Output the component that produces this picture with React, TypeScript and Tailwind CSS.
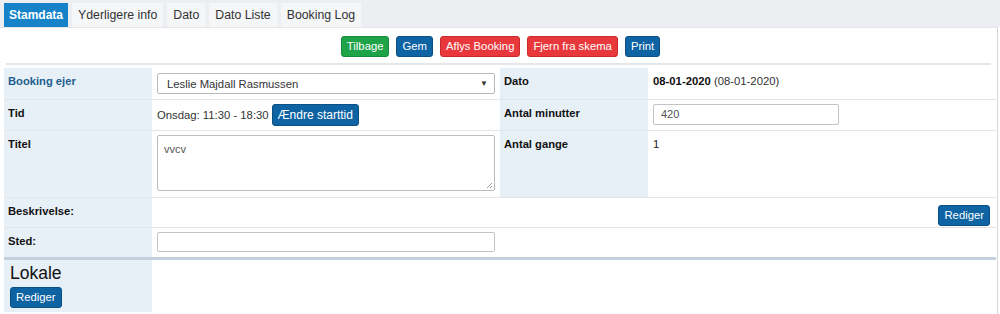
import React from 'react';

const font = { fontFamily: '"Liberation Sans", Arial, sans-serif' };

function Btn({ color, children }: { color: 'blue' | 'green' | 'red'; children: React.ReactNode }) {
  const cls =
    color === 'green'
      ? 'bg-[#1fa349] border-[#178a3b]'
      : color === 'red'
      ? 'bg-[#e8383b] border-[#c92a2d]'
      : 'bg-[#0e63a3] border-[#0a4f85]';
  return (
    <button className={`${cls} border text-white text-[11.3px] leading-none h-[21px] px-[5px] rounded-[3px]`}>
      {children}
    </button>
  );
}

const labelBase = 'bg-[#e7eff7] align-top pl-[4px] pr-[5px] pt-[6px] pb-0 font-bold text-[11.2px] leading-[14px]';
const labelCell = `${labelBase} text-[#111]`;
const valueCell = 'align-top px-[5px] pt-[4px] pb-0 text-[11.3px] leading-[14px] text-[#222]';

export default function App() {
  return (
    <div className="w-[1000px] h-[314px] bg-white overflow-hidden" style={font}>
      {/* Tabs */}
      <div className="h-[27px] bg-[#eceef1] flex items-end gap-[4px] pl-[4px]">
        <div className="h-[24px] px-[5px] flex items-center bg-[#1683c9] text-white font-bold text-[12px]">Stamdata</div>
        <div className="h-[24px] px-[6px] flex items-center bg-[#f5f6f7] text-[#333] text-[12.3px]">Yderligere info</div>
        <div className="h-[24px] px-[6px] flex items-center bg-[#f5f6f7] text-[#333] text-[12.3px]">Dato</div>
        <div className="h-[24px] px-[6px] flex items-center bg-[#f5f6f7] text-[#333] text-[12.3px]">Dato Liste</div>
        <div className="h-[24px] px-[6px] flex items-center bg-[#f5f6f7] text-[#333] text-[12.3px]">Booking Log</div>
      </div>

      <div className="w-[998px] h-[287px] border-r border-[#d6d6d6] border-t border-t-[#e4e6e9]">
        {/* Actions */}
        <div className="flex justify-center gap-[7px] pt-[8px] pl-[4px]">
          <Btn color="green">Tilbage</Btn>
          <Btn color="blue">Gem</Btn>
          <Btn color="red">Aflys Booking</Btn>
          <Btn color="red">Fjern fra skema</Btn>
          <Btn color="blue">Print</Btn>
        </div>
        <div className="mx-[6px] mt-[6px] border-t-2 border-[#e6e6e6]" />

        <table className="ml-[4px] mt-[3px] w-[992px] table-fixed border-collapse">
          <colgroup>
            <col className="w-[148px]" />
            <col className="w-[348px]" />
            <col className="w-[148px]" />
            <col className="w-[348px]" />
          </colgroup>
          <tbody>
            <tr className="h-[31px]">
              <td className={`${labelBase} text-[#1d5f8f]`}>Booking ejer</td>
              <td className={`${valueCell} pt-[5px]`}>
                <div className="h-[21px] border border-[#b9b9b9] rounded-[2px] flex items-center justify-between pl-[9px] pr-[6px] text-[#333]">
                  <span>Leslie Majdall Rasmussen</span>
                  <span className="text-[8px] text-[#333]">▼</span>
                </div>
              </td>
              <td className={labelCell}>Dato</td>
              <td className={`${valueCell} pt-[6px]`}>
                <span className="font-bold text-[#111]">08-01-2020</span> <span className="text-[#333]">(08-01-2020)</span>
              </td>
            </tr>
            <tr className="h-[31px] border-t border-[#e2e6ea]">
              <td className={labelCell}>Tid</td>
              <td className={valueCell}>
                <div className="flex items-center gap-[3px]">
                  <span className="text-[#333]">Onsdag: 11:30 - 18:30</span>
                  <button className="bg-[#0e63a3] border border-[#0a4f85] text-white text-[12px] h-[22px] px-[5px] rounded-[3px]">
                    Ændre starttid
                  </button>
                </div>
              </td>
              <td className={labelCell}>Antal minutter</td>
              <td className={valueCell}>
                <div className="w-[186px] h-[21px] border border-[#c4c4c4] rounded-[2px] flex items-center px-[7px] text-[11px] text-[#555]">420</div>
              </td>
            </tr>
            <tr className="h-[67px] border-t border-[#e2e6ea]">
              <td className={labelCell}>Titel</td>
              <td className={valueCell}>
                <div className="relative h-[56px] border border-[#bdbdbd] rounded-[2px] px-[6px] pt-[6px] text-[11px] text-[#555]">
                  vvcv
                  <svg className="absolute right-[1px] bottom-[1px]" width="8" height="8" viewBox="0 0 8 8">
                    <path d="M7 2 L2 7 M7 5 L5 7" stroke="#999" strokeWidth="1" />
                  </svg>
                </div>
              </td>
              <td className={labelCell}>Antal gange</td>
              <td className={`${valueCell} pt-[6px] text-[#222]`}>1</td>
            </tr>
            <tr className="h-[30px] border-t border-[#e2e6ea]">
              <td className={labelCell}>Beskrivelse:</td>
              <td colSpan={3} className="align-top pt-[4px] pb-0 pr-[6px] text-right">
                <Btn color="blue">Rediger</Btn>
              </td>
            </tr>
            <tr className="h-[31px] border-t border-[#e2e6ea]">
              <td className={labelCell}>Sted:</td>
              <td className={valueCell}>
                <div className="h-[20px] border border-[#c4c4c4] rounded-[2px]" />
              </td>
              <td colSpan={2} />
            </tr>
            <tr className="h-[54px] border-t-[3px] border-[#c4d1dc]">
              <td className="bg-[#e7eff7] align-top pl-[6px] pt-[3px]">
                <div className="text-[17.5px] leading-[20px] text-[#111]">Lokale</div>
                <div className="mt-[1px]">
                  <Btn color="blue">Rediger</Btn>
                </div>
              </td>
              <td colSpan={3} />
            </tr>
          </tbody>
        </table>
      </div>
    </div>
  );
}
